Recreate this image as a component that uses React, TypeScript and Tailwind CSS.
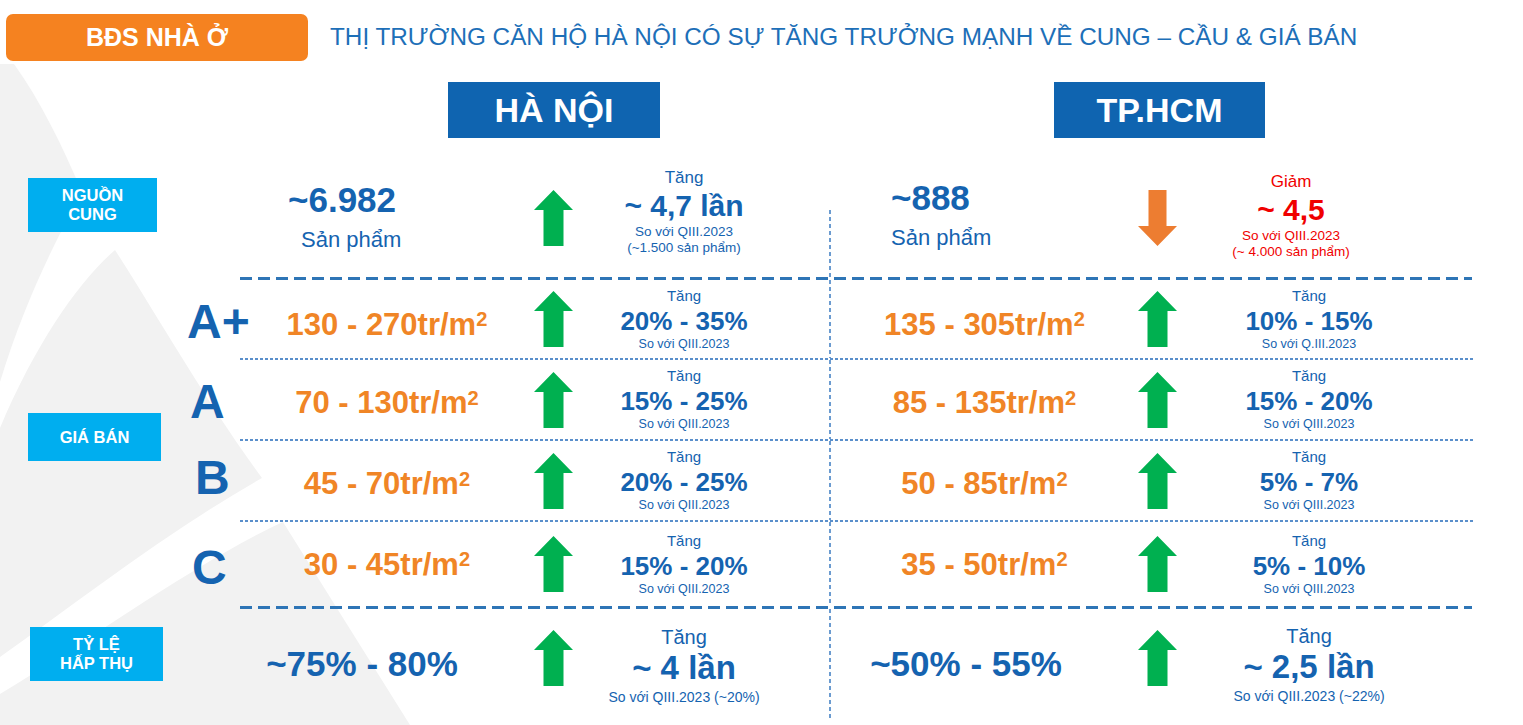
import React from "react";

const BLUE = "text-[#1563b0]";

function UpArrow() {
  return (
    <svg width="39" height="56" viewBox="0 0 39 56">
      <path d="M19.5 0 L39 20 L29.5 20 L29.5 56 L9.5 56 L9.5 20 L0 20 Z" fill="#00b050" />
    </svg>
  );
}

function DownArrow() {
  return (
    <svg width="39" height="56" viewBox="0 0 39 56">
      <path d="M10.5 0 L28.5 0 L28.5 36 L39 36 L19.5 56 L0 36 L10.5 36 Z" fill="#ed7d31" />
    </svg>
  );
}

function ThickLine() {
  return (
    <div className="h-[3px] w-[1232px] bg-[repeating-linear-gradient(to_right,#2e75b6_0px,#2e75b6_12px,transparent_12px,transparent_18px)]" />
  );
}

function ThinLine() {
  return (
    <div className="h-[2px] w-[1235px] bg-[repeating-linear-gradient(to_right,#5a8fcb_0px,#5a8fcb_3px,transparent_3px,transparent_5px)]" />
  );
}

function Divider({ cls = "" }: { cls?: string }) {
  return (
    <div
      className={`w-[2px] self-stretch bg-[repeating-linear-gradient(to_bottom,#6b9bd0_0px,#6b9bd0_4px,transparent_4px,transparent_7px)] ${cls}`}
    />
  );
}

function Price({ v }: { v: string }) {
  return (
    <span className="font-bold text-[31px] leading-none text-[#f08526] whitespace-nowrap">
      {v}tr/m<sup className="text-[0.65em] top-[-0.42em]">2</sup>
    </span>
  );
}

function Change({ pct, so }: { pct: string; so: string }) {
  return (
    <>
      <div className="text-[15px] leading-[18px]">Tăng</div>
      <div className="text-[26px] leading-[32px] font-bold whitespace-nowrap">{pct}</div>
      <div className="text-[12.5px] leading-[15px] whitespace-nowrap">{so}</div>
    </>
  );
}

type Row = {
  letter: string;
  letterCls: string;
  h: string;
  thick: boolean;
  pricePad: string;
  hn: { price: string; pct: string };
  hcm: { price: string; pct: string; so: string };
};

const rows: Row[] = [
  {
    letter: "A+",
    letterCls: "pl-[7px] pt-[8px]",
    h: "h-[78px]",
    thick: true,
    pricePad: "pt-[10px]",
    hn: { price: "130 - 270", pct: "20% - 35%" },
    hcm: { price: "135 - 305", pct: "10% - 15%", so: "So với Q.III.2023" },
  },
  {
    letter: "A",
    letterCls: "pl-[10px] pt-[7px]",
    h: "h-[79px]",
    thick: false,
    pricePad: "pt-[6px]",
    hn: { price: "70 - 130", pct: "15% - 25%" },
    hcm: { price: "85 - 135", pct: "15% - 20%", so: "So với QIII.2023" },
  },
  {
    letter: "B",
    letterCls: "pl-[15px] pb-[3px]",
    h: "h-[79px]",
    thick: false,
    pricePad: "pt-[6px]",
    hn: { price: "45 - 70", pct: "20% - 25%" },
    hcm: { price: "50 - 85", pct: "5% - 7%", so: "So với QIII.2023" },
  },
  {
    letter: "C",
    letterCls: "pl-[12px] pt-[10px]",
    h: "h-[84px]",
    thick: false,
    pricePad: "pt-0",
    hn: { price: "30 - 45", pct: "15% - 20%" },
    hcm: { price: "35 - 50", pct: "5% - 10%", so: "So với QIII.2023" },
  },
];

function PriceRow({ r }: { r: Row }) {
  return (
    <div className="flex">
      <div className={`w-[60px] flex items-center ${r.letterCls}`}>
        <span className={`font-bold text-[48px] leading-none ${BLUE}`}>{r.letter}</span>
      </div>
      <div className="w-[1236px] flex flex-col">
        {r.thick ? <ThickLine /> : <ThinLine />}
        <div className={`flex ${r.h}`}>
          <div className="w-[589px] flex items-center">
            <div className={`w-[294px] flex justify-center ${r.pricePad}`}>
              <Price v={r.hn.price} />
            </div>
            <div className="w-[39px] flex">
              <UpArrow />
            </div>
            <div className={`w-[222px] flex flex-col items-center ${BLUE}`}>
              <Change pct={r.hn.pct} so="So với QIII.2023" />
            </div>
          </div>
          <Divider />
          <div className="w-[645px] flex items-center">
            <div className={`w-[307px] flex justify-center ${r.pricePad}`}>
              <Price v={r.hcm.price} />
            </div>
            <div className="w-[39px] flex">
              <UpArrow />
            </div>
            <div className={`w-[264px] flex flex-col items-center ${BLUE}`}>
              <Change pct={r.hcm.pct} so={r.hcm.so} />
            </div>
          </div>
        </div>
      </div>
    </div>
  );
}

function Label({ cls, children }: { cls: string; children: React.ReactNode }) {
  return (
    <div
      className={`bg-[#00aeef] text-white font-bold text-[16.5px] leading-[19px] flex items-center justify-center text-center ${cls}`}
    >
      {children}
    </div>
  );
}

export default function App() {
  return (
    <div className="relative w-[1523px] h-[725px] overflow-hidden bg-white font-['Liberation_Sans',Arial,sans-serif]">
      <svg
        className="absolute left-0 top-0 pointer-events-none"
        width="420"
        height="725"
        viewBox="0 0 420 725"
      >
        <path d="M0 64 L14 64 C40 100 62 145 82 192 C50 250 22 310 0 382 Z" fill="#f2f2f2" />
        <path d="M0 428 C35 345 78 282 115 250 C160 320 205 400 262 478 C170 530 80 600 0 657 Z" fill="#f2f2f2" />
        <path d="M0 694 C90 640 200 560 283 522 L410 725 L0 725 Z" fill="#f2f2f2" />
      </svg>

      <div className="relative">
        {/* Header */}
        <div className="flex items-center pt-[14px] pl-[6px]">
          <div className="w-[302px] h-[47px] rounded-[7px] bg-[#f58220] flex items-center justify-center text-white font-bold text-[25px]">
            BĐS NHÀ Ở
          </div>
          <div className="ml-[22px] text-[#1d6fb8] text-[24.3px] whitespace-nowrap">
            THỊ TRƯỜNG CĂN HỘ HÀ NỘI CÓ SỰ TĂNG TRƯỞNG MẠNH VỀ CUNG – CẦU &amp; GIÁ BÁN
          </div>
        </div>

        {/* City headers */}
        <div className="flex mt-[21px] pl-[448px]">
          <div className="w-[212px] h-[56px] bg-[#0f64b0] flex items-center justify-center text-white font-bold text-[34px]">
            HÀ NỘI
          </div>
          <div className="ml-[394px] w-[211px] h-[56px] bg-[#0f64b0] flex items-center justify-center text-white font-bold text-[34px]">
            TP.HCM
          </div>
        </div>

        {/* Body */}
        <div className="flex mt-[27px]">
          <div className="w-[180px] flex flex-col">
            <div className="h-[115px] pt-[13px] pl-[28px]">
              <Label cls="w-[129px] h-[54px]">
                NGUỒN
                <br />
                CUNG
              </Label>
            </div>
            <div className="h-[329px] pt-[133px] pl-[28px]">
              <Label cls="w-[133px] h-[48px]">GIÁ BÁN</Label>
            </div>
            <div className="h-[109px] pt-[18px] pl-[30px]">
              <Label cls="w-[133px] h-[54px]">
                TỶ LỆ
                <br />
                HẤP THỤ
              </Label>
            </div>
          </div>

          <div className="flex flex-col">
            {/* Row 1: supply */}
            <div className="flex">
              <div className="w-[60px]" />
              <div className="w-[1236px] flex h-[112px] items-start">
                <div className="w-[589px] flex items-start">
                  <div className={`w-[294px] pt-[15px] pl-[48px] ${BLUE}`}>
                    <div className="text-[35px] font-bold leading-[40px]">~6.982</div>
                    <div className="text-[22px] leading-[40px] pl-[13px]">Sản phẩm</div>
                  </div>
                  <div className="w-[39px] pt-[25px] flex">
                    <UpArrow />
                  </div>
                  <div className={`w-[222px] pt-[3px] flex flex-col items-center ${BLUE}`}>
                    <div className="text-[17px] leading-[20px]">Tăng</div>
                    <div className="text-[30px] font-bold leading-[36px]">~ 4,7 lần</div>
                    <div className="text-[13.5px] leading-[16px]">So với QIII.2023</div>
                    <div className="text-[13.5px] leading-[16px]">(~1.500 sản phẩm)</div>
                  </div>
                </div>
                <Divider cls="mt-[45px]" />
                <div className="w-[645px] flex items-start">
                  <div className={`w-[307px] pt-[13px] pl-[60px] ${BLUE}`}>
                    <div className="text-[35px] font-bold leading-[40px]">~888</div>
                    <div className="text-[22px] leading-[40px]">Sản phẩm</div>
                  </div>
                  <div className="w-[39px] pt-[25px] flex">
                    <DownArrow />
                  </div>
                  <div className="w-[264px] pr-[36px] pt-[7px] flex flex-col items-center text-[#f00000]">
                    <div className="text-[17px] leading-[20px]">Giảm</div>
                    <div className="text-[30px] font-bold leading-[36px]">~ 4,5</div>
                    <div className="text-[13.5px] leading-[16px]">So với QIII.2023</div>
                    <div className="text-[13.5px] leading-[16px]">(~ 4.000 sản phẩm)</div>
                  </div>
                </div>
              </div>
            </div>

            {rows.map((r) => (
              <PriceRow key={r.letter} r={r} />
            ))}

            {/* Absorption row */}
            <div className="flex">
              <div className="w-[60px]" />
              <div className="w-[1236px] flex flex-col">
                <ThickLine />
                <div className="flex h-[109px]">
                  <div className="w-[589px] flex items-center">
                    <div className={`w-[294px] flex justify-center pr-[50px] ${BLUE}`}>
                      <span className="text-[35px] font-bold leading-none whitespace-nowrap">~75% - 80%</span>
                    </div>
                    <div className="w-[39px] flex pb-[12px]">
                      <UpArrow />
                    </div>
                    <div className={`w-[222px] pt-[5px] flex flex-col items-center ${BLUE}`}>
                      <div className="text-[20px] leading-[24px]">Tăng</div>
                      <div className="text-[33px] font-bold leading-[38px] whitespace-nowrap">~ 4 lần</div>
                      <div className="text-[14px] leading-[20px] whitespace-nowrap">So với QIII.2023 (~20%)</div>
                    </div>
                  </div>
                  <Divider />
                  <div className="w-[645px] flex items-center">
                    <div className={`w-[307px] flex justify-center pr-[37px] ${BLUE}`}>
                      <span className="text-[35px] font-bold leading-none whitespace-nowrap">~50% - 55%</span>
                    </div>
                    <div className="w-[39px] flex pb-[12px]">
                      <UpArrow />
                    </div>
                    <div className={`w-[264px] pt-[3px] flex flex-col items-center ${BLUE}`}>
                      <div className="text-[20px] leading-[24px]">Tăng</div>
                      <div className="text-[33px] font-bold leading-[38px] whitespace-nowrap">~ 2,5 lần</div>
                      <div className="text-[14px] leading-[20px] whitespace-nowrap">So với QIII.2023 (~22%)</div>
                    </div>
                  </div>
                </div>
              </div>
            </div>
          </div>
        </div>
      </div>
    </div>
  );
}
